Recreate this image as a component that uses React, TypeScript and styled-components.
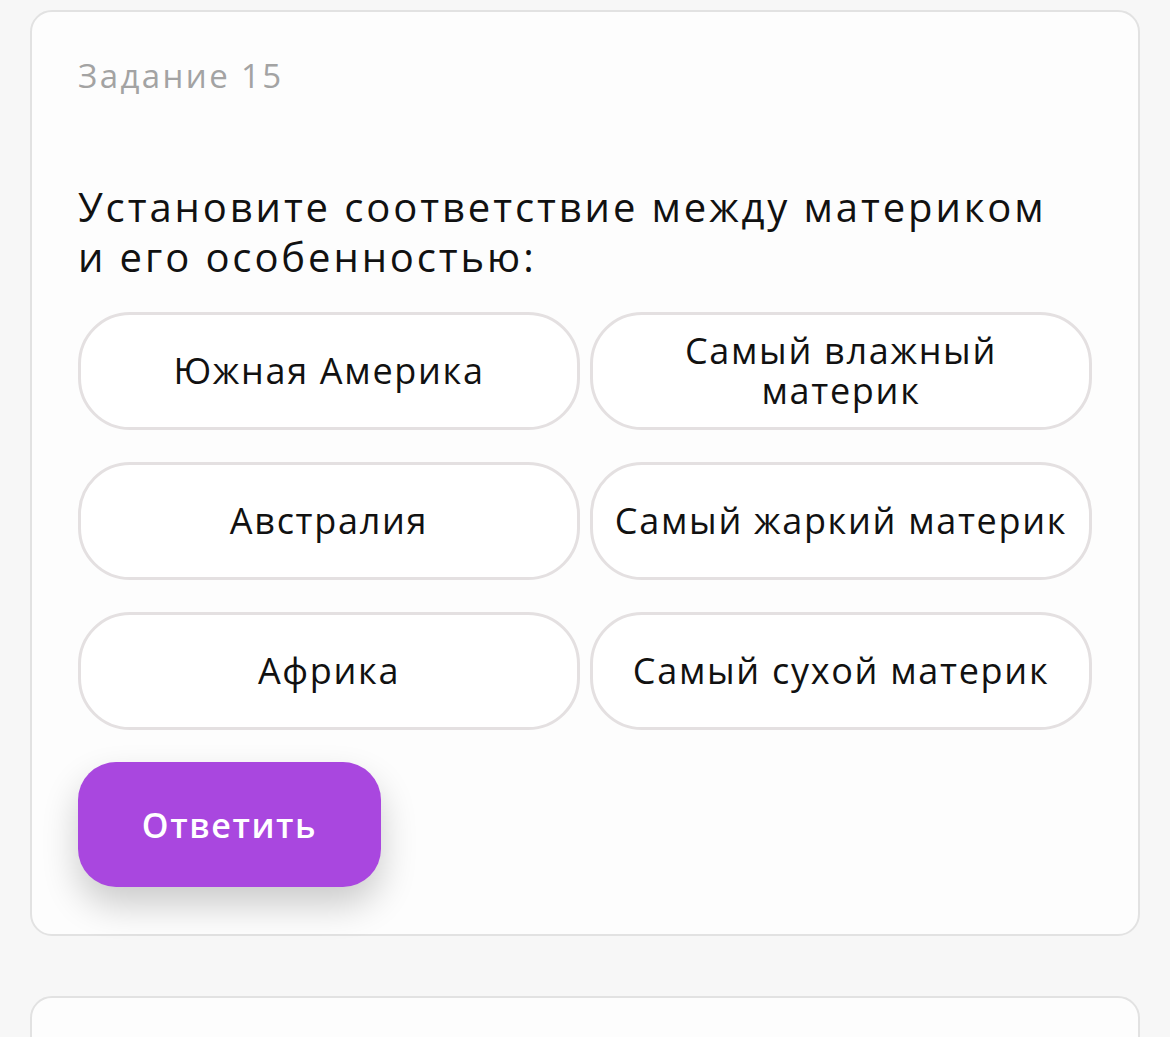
import React from 'react';
import styled, { createGlobalStyle } from 'styled-components';

// варианты для сопоставления
type PairType = {
    left: string;
    right: string;
}

const pairs: PairType[] = [
    { left: 'Южная Америка', right: 'Самый влажный материк' },
    { left: 'Австралия', right: 'Самый жаркий материк' },
    { left: 'Африка', right: 'Самый сухой материк' },
];

const GlobalStyle = createGlobalStyle`
    * {
        box-sizing: border-box;
    }
    body {
        margin: 0;
        background-color: #f7f7f7;
        font-family: "Open Sans", "Noto Sans", sans-serif;
        color: #111;
    }
`

export default function App() {
    return (
        <>
            <GlobalStyle/>
            <Page>
                <Card>
                    <TaskNumber>Задание 15</TaskNumber>
                    <Question>Установите соответствие между материком и его особенностью:</Question>
                    <Options>
                        {pairs.map((p) => (
                            <React.Fragment key={p.left}>
                                <Option>{p.left}</Option>
                                <Option>{p.right}</Option>
                            </React.Fragment>
                        ))}
                    </Options>
                    <AnswerButton>Ответить</AnswerButton>
                </Card>
                <Card $empty/>
            </Page>
        </>
    );
}

const Page = styled.div`
    height: 100vh;
    overflow: hidden;
    padding: 10px 30px 0;
    display: flex;
    flex-direction: column;
    gap: 60px;
`

// белая карточка задания
const Card = styled.div<{ $empty?: boolean }>`
    flex-shrink: 0;
    background-color: #fdfdfd;
    border: 2px solid #e2e2e2;
    border-radius: 22px;
    padding: ${({ $empty }) => ($empty ? '0' : '44px 46px 47px')};
    min-height: ${({ $empty }) => ($empty ? '120px' : 'auto')};
`

const TaskNumber = styled.div`
    font-size: 33px;
    line-height: 40px;
    letter-spacing: 2.4px;
    color: #a3a3a3;
`

const Question = styled.h2`
    margin: 86px 0 0;
    font-size: 40px;
    font-weight: 500;
    line-height: 50px;
    letter-spacing: 2.9px;
    max-width: 990px;
`

const Options = styled.div`
    margin-top: 30px;
    display: grid;
    grid-template-columns: 1fr 1fr;
    column-gap: 10px;
    row-gap: 32px;
`

const Option = styled.div`
    height: 118px;
    border: 3px solid #e4e0e1;
    border-radius: 52px;
    background-color: #fff;
    display: flex;
    align-items: center;
    justify-content: center;
    text-align: center;
    padding: 0 12px;
    font-size: 36px;
    line-height: 40px;
    letter-spacing: 1.7px;
    color: #111;
`

const AnswerButton = styled.button`
    margin-top: 32px;
    width: 303px;
    height: 125px;
    border: none;
    border-radius: 38px;
    background-color: #a947df;
    color: #fff;
    font-family: inherit;
    font-size: 34px;
    font-weight: 600;
    letter-spacing: 1.6px;
    box-shadow: 0 18px 36px rgba(0, 0, 0, 0.2);
    cursor: pointer;
`
